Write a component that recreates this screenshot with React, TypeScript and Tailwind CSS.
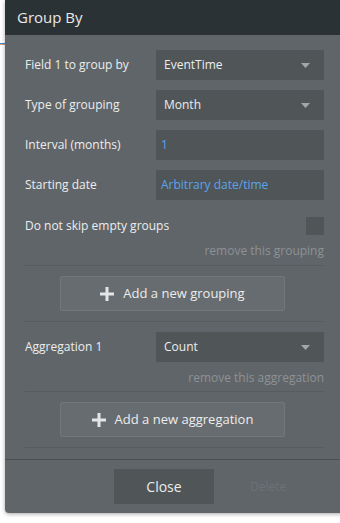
import React from 'react';

const font = { fontFamily: '"Open Sans", "Noto Sans", sans-serif' };

const Caret = () => (
  <svg width="9" height="5" viewBox="0 0 9 5" className="shrink-0">
    <path d="M0 0 H9 L4.5 5 Z" fill="#a3a7aa" />
  </svg>
);

const Plus = () => (
  <svg width="14" height="14" viewBox="0 0 14 14" className="shrink-0">
    <path d="M5.5 0 H8.5 V5.5 H14 V8.5 H8.5 V14 H5.5 V8.5 H0 V5.5 H5.5 Z" fill="#e4e5e6" />
  </svg>
);

const Row = ({ label, children }: { label: string; children: React.ReactNode }) => (
  <div className="flex items-center h-[30px]">
    <div className="w-[131px] text-[12px] text-[#eceded]">{label}</div>
    {children}
  </div>
);

const Select = ({ value }: { value: string }) => (
  <div className="flex items-center justify-between w-[168px] h-[30px] bg-[#505558] pl-[8px] pr-[14px] text-[12px] text-[#eceded]">
    <span>{value}</span>
    <Caret />
  </div>
);

const Input = ({ value }: { value: string }) => (
  <div className="flex items-center w-[168px] h-[30px] bg-[#505558] pl-[5px] text-[12px] text-[#5aa4ec]">
    {value}
  </div>
);

const Divider = () => <div className="h-px bg-[#575c60]" />;

const AddButton = ({ label }: { label: string }) => (
  <div className="flex pl-[35px]">
    <div className="flex items-center justify-center gap-[9px] w-[225px] h-[35px] bg-[#676c70] border border-[#72777a] rounded-[2px] text-[13px] text-[#eceded]">
      <Plus />
      <span>{label}</span>
    </div>
  </div>
);

export default function App() {
  return (
    <div className="relative w-[340px] h-[523px] bg-white overflow-hidden" style={font}>
      <div className="absolute left-0 top-[43px] w-[6px] h-px bg-[#3a8ee0]" />
      <div className="absolute left-0 top-[44px] w-[6px] h-px bg-[#e6a07a]" />
      <div className="relative ml-[5px] w-[340px] h-[513px] bg-[#606569] rounded-bl-[4px] shadow-[0_1px_4px_rgba(0,0,0,0.35)] flex flex-col">
        <div className="h-[35px] bg-[#2b3235] flex items-center pl-[12px] text-[15px] text-[#e8e9e9]">
          Group By
        </div>
        <div className="flex flex-col pl-[20px] pr-[21px] pt-[15px]">
          <div className="flex flex-col gap-[10px]">
            <Row label="Field 1 to group by"><Select value="EventTime" /></Row>
            <Row label="Type of grouping"><Select value="Month" /></Row>
            <Row label="Interval (months)"><Input value="1" /></Row>
            <Row label="Starting date"><Input value="Arbitrary date/time" /></Row>
          </div>
          <div className="flex items-center justify-between h-[18px] mt-[17px]">
            <span className="text-[12px] text-[#eceded]">Do not skip empty groups</span>
            <div className="w-[18px] h-[18px] bg-[#505558]" />
          </div>
          <div className="text-right text-[12px] text-[#8d9295] leading-[18px] mt-[7px]">remove this grouping</div>
          <div className="mt-[5px]"><Divider /></div>
          <div className="mt-[10px]"><AddButton label="Add a new grouping" /></div>
          <div className="mt-[10px]"><Divider /></div>
          <div className="mt-[10px]"><Row label="Aggregation 1"><Select value="Count" /></Row></div>
          <div className="text-right text-[12px] text-[#8d9295] leading-[18px] mt-[7px]">remove this aggregation</div>
          <div className="mt-[4px]"><Divider /></div>
          <div className="mt-[10px]"><AddButton label="Add a new aggregation" /></div>
          <div className="mt-[10px]"><Divider /></div>
        </div>
        <div className="mt-[11px] h-px bg-[#4a4f52]" />
        <div className="flex items-start pt-[9px]">
          <div className="ml-[109px] w-[100px] h-[35px] bg-[#505558] flex items-center justify-center text-[14px] text-[#eceded]">
            Close
          </div>
          <div className="ml-[36px] h-[35px] flex items-center text-[12px] text-[#6c7275]">Delete</div>
        </div>
      </div>
    </div>
  );
}
